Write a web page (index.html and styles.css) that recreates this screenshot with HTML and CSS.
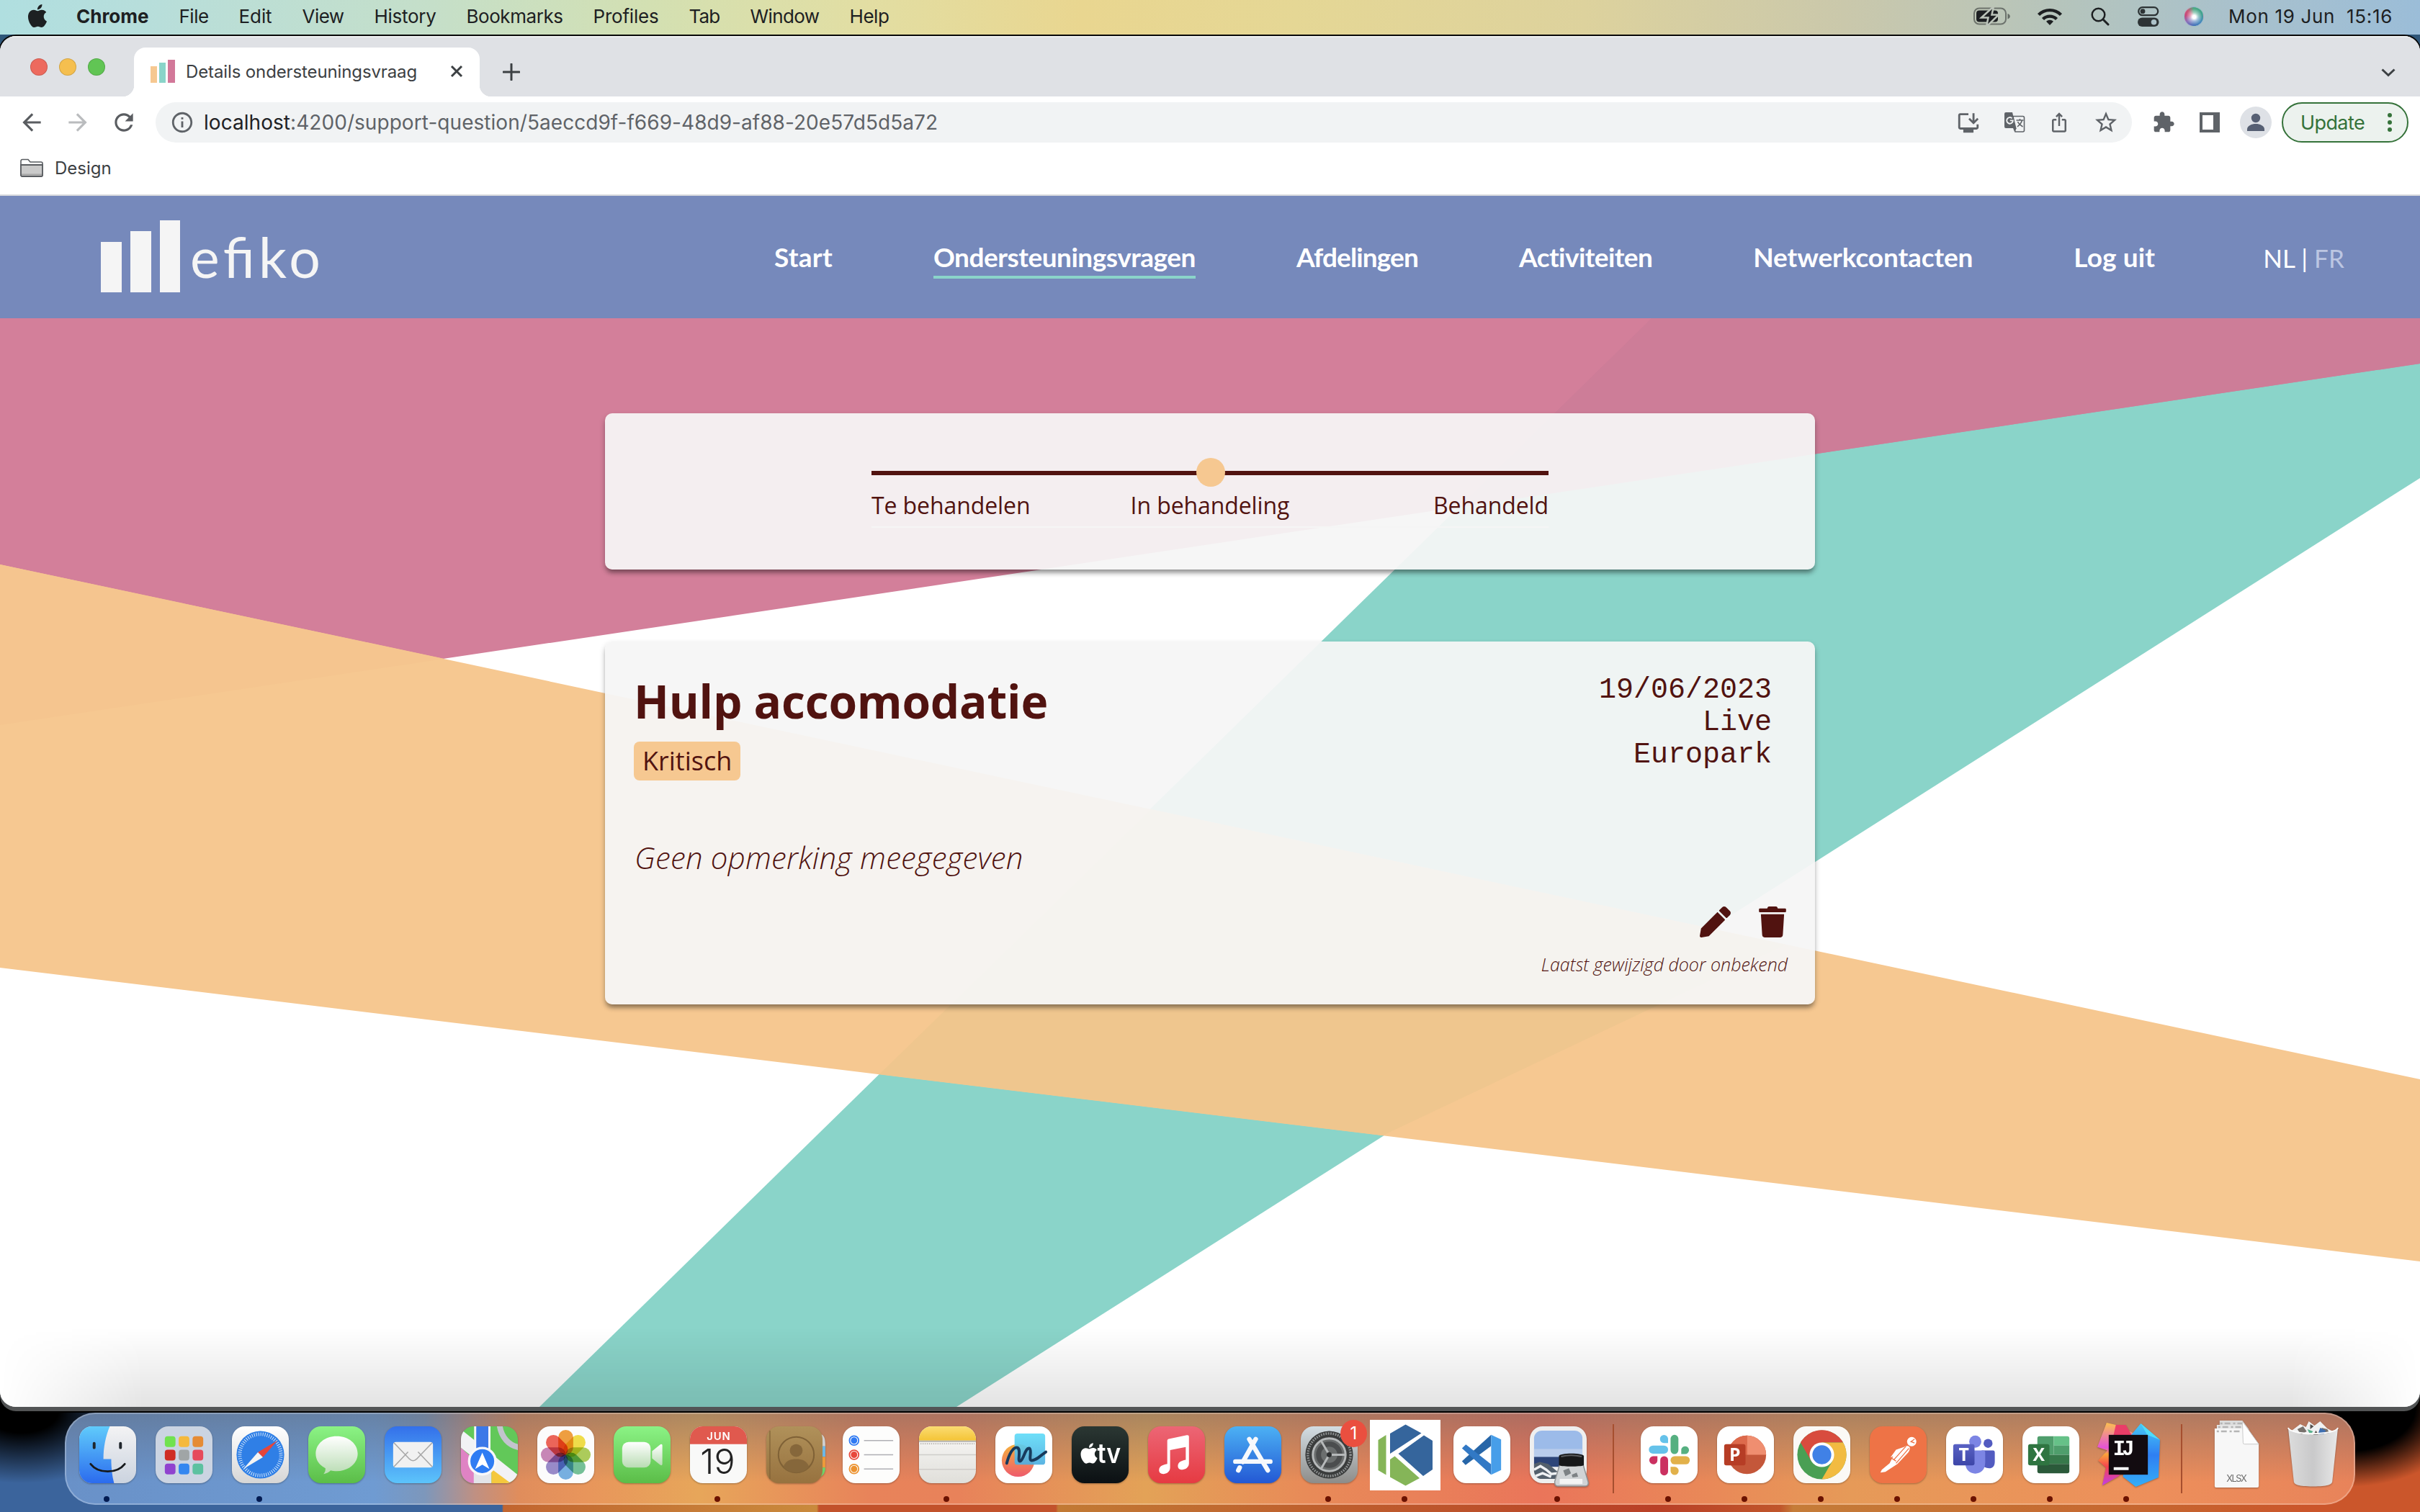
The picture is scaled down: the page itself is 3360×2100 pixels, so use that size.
FILE: index.html
```html
<!DOCTYPE html>
<html lang="nl">
<head>
<meta charset="utf-8">
<title>Details ondersteuningsvraag</title>
<link rel="stylesheet" href="styles.css">
</head>
<body>
<svg class="defs" width="0" height="0">
  <defs>
    <linearGradient id="g-green" x1="0" y1="0" x2="0" y2="1"><stop offset="0" stop-color="#8bf385"/><stop offset="1" stop-color="#5bbd48"/></linearGradient>
    <linearGradient id="g-blue" x1="0" y1="0" x2="0" y2="1"><stop offset="0" stop-color="#60cbfb"/><stop offset="1" stop-color="#2b6bee"/></linearGradient>
    <linearGradient id="g-mail" x1="0" y1="0" x2="0" y2="1"><stop offset="0" stop-color="#3470ea"/><stop offset="1" stop-color="#5cc4fb"/></linearGradient>
    <linearGradient id="g-store" x1="0" y1="0" x2="0" y2="1"><stop offset="0" stop-color="#4cb1f4"/><stop offset="1" stop-color="#2358d4"/></linearGradient>
    <linearGradient id="g-grey" x1="0" y1="0" x2="0" y2="1"><stop offset="0" stop-color="#ffffff"/><stop offset="1" stop-color="#d6d6d6"/></linearGradient>
    <linearGradient id="g-soft" x1="0" y1="0" x2="0" y2="1"><stop offset="0" stop-color="#ffffff"/><stop offset="1" stop-color="#b9dcb3"/></linearGradient>
    <linearGradient id="g-face" x1="0" y1="0" x2="0" y2="1"><stop offset="0" stop-color="#f3f3f4"/><stop offset="1" stop-color="#cbd3df"/></linearGradient>
    <linearGradient id="g-music" x1="0" y1="0" x2="0" y2="1"><stop offset="0" stop-color="#ec6675"/><stop offset="1" stop-color="#e63a42"/></linearGradient>
    <linearGradient id="g-tv" x1="0" y1="0" x2="0" y2="1"><stop offset="0" stop-color="#2b3733"/><stop offset="1" stop-color="#0b1013"/></linearGradient>
    <linearGradient id="g-note" x1="0" y1="0" x2="0" y2="1"><stop offset="0" stop-color="#fbdc72"/><stop offset="1" stop-color="#f4c436"/></linearGradient>
    <linearGradient id="g-paper" x1="0" y1="0" x2="0" y2="1"><stop offset="0" stop-color="#fbfaf9"/><stop offset="1" stop-color="#e0dfda"/></linearGradient>
    <linearGradient id="g-brown" x1="0" y1="0" x2="0" y2="1"><stop offset="0" stop-color="#b0915a"/><stop offset="1" stop-color="#97723f"/></linearGradient>
    <linearGradient id="g-steel" x1="0" y1="0" x2="0" y2="1"><stop offset="0" stop-color="#d3dde3"/><stop offset="1" stop-color="#8d8c89"/></linearGradient>
    <linearGradient id="g-form" x1="0" y1="0" x2="0" y2="1"><stop offset="0" stop-color="#f5b13c"/><stop offset="1" stop-color="#ee5b6c"/></linearGradient>
    <linearGradient id="g-cyan" x1="0" y1="0" x2="0" y2="1"><stop offset="0" stop-color="#62dcf8"/><stop offset="1" stop-color="#4eaee0"/></linearGradient>
    <linearGradient id="g-ij1" x1="0" y1="0" x2="0" y2="1"><stop offset="0" stop-color="#fbc04f"/><stop offset=".4" stop-color="#e552d8"/><stop offset=".5" stop-color="#fba63a"/><stop offset=".7" stop-color="#f5434f"/><stop offset="1" stop-color="#c13de8"/></linearGradient>
    <linearGradient id="g-ij2" x1="0" y1="0" x2="0" y2="1"><stop offset="0" stop-color="#46c9f6"/><stop offset=".5" stop-color="#2f7ff3"/><stop offset="1" stop-color="#35aef7"/></linearGradient>
    <linearGradient id="g-teams" x1="0" y1="0" x2="0" y2="1"><stop offset="0" stop-color="#5a62c4"/><stop offset="1" stop-color="#3c45a8"/></linearGradient>
    <linearGradient id="g-bin" x1="0" y1="0" x2="1" y2="0"><stop offset="0" stop-color="#dcdcdc"/><stop offset=".5" stop-color="#c9c9ca"/><stop offset="1" stop-color="#e8e8e8"/></linearGradient>
    <clipPath id="squircle"><rect width="80" height="80" rx="18"/></clipPath>
    <path id="apple" d="M12.152 6.896c-.948 0-2.415-1.078-3.96-1.04-2.04.027-3.91 1.183-4.961 3.014-2.117 3.675-.546 9.103 1.519 12.09 1.013 1.454 2.208 3.09 3.792 3.039 1.52-.065 2.09-.987 3.935-.987 1.831 0 2.35.987 3.96.948 1.637-.026 2.676-1.48 3.676-2.948 1.156-1.688 1.636-3.325 1.662-3.415-.039-.013-3.182-1.221-3.22-4.857-.026-3.04 2.48-4.494 2.597-4.559-1.429-2.09-3.623-2.324-4.39-2.376-2-.156-3.675 1.09-4.61 1.09zM15.53 3.83c.843-1.012 1.4-2.427 1.245-3.83-1.207.052-2.662.805-3.532 1.818-.78.896-1.454 2.338-1.273 3.714 1.338.104 2.715-.688 3.559-1.701"/>
  </defs>
</svg>

<header class="menubar">
  <svg class="apple" width="32" height="32" viewBox="0 0 24 24"><use href="#apple"/></svg>
  <nav class="menus">
    <b class="m-chrome">Chrome</b><span class="m-file">File</span><span class="m-edit">Edit</span><span class="m-view">View</span><span class="m-history">History</span><span class="m-bookmarks">Bookmarks</span><span class="m-profiles">Profiles</span><span class="m-tab">Tab</span><span class="m-window">Window</span><span class="m-help">Help</span>
  </nav>
  <div class="status">
    <svg width="52" height="26" viewBox="0 0 52 26"><rect x="1" y="1.500" width="44" height="22" rx="7" fill="none" stroke="#1d2022" stroke-opacity=".5" stroke-width="2"/><path d="M47.500 9v7.500c2-.6 3.300-2 3.300-3.700s-1.300-3.200-3.300-3.800z" fill="#1d2022" opacity=".55"/><rect x="4" y="4.500" width="30" height="16" rx="4" fill="#1d2022"/><path d="M28 -1L11 14.500h9.500L18 27 35 10.500h-9.500z" fill="#1d2022" stroke="#bcc4ba" stroke-width="2.500"/></svg>
    <svg class="wifi" width="36" height="26" viewBox="0 0 36 26"><g fill="none" stroke="#1d2022" stroke-width="4.400"><path d="M2.500 10.500a22 22 0 0 1 31 0"/><path d="M8.500 16.500a13.500 13.500 0 0 1 19 0"/></g><path d="M18 25l-5-5.200a7.200 7.200 0 0 1 10 0z" fill="#1d2022"/></svg>
    <svg class="find" width="28" height="26" viewBox="0 0 28 26"><circle cx="11.500" cy="10.500" r="8.800" fill="none" stroke="#1d2022" stroke-width="2.500"/><path d="M18 17l7 7" stroke="#1d2022" stroke-width="3" stroke-linecap="round"/></svg>
    <svg class="control" width="30" height="28" viewBox="0 0 30 28"><rect x="1.200" y="1.200" width="27" height="11" rx="5.500" fill="none" stroke="#2d3335" stroke-width="2.300"/><circle cx="7" cy="6.700" r="3.400" fill="#2d3335"/><rect x="0" y="15.500" width="29.500" height="12.500" rx="6.200" fill="#2d3335"/><circle cx="22.500" cy="21.700" r="3.800" fill="#adc2c9"/></svg>
    <div class="siri"><i></i></div>
    <span class="clock">Mon 19 Jun&nbsp; 15:16</span>
  </div>
</header>

<section class="window">
  <div class="tabstrip">
    <div class="lights"><i class="red"></i><i class="amber"></i><i class="green"></i></div>
    <div class="tab">
      <svg width="34" height="32" viewBox="0 0 34 32"><path fill="#f6c891" d="M0 9h9v23H0z"/><path fill="#8ad4c9" d="M12 4h9v28h-9z"/><path fill="#d27899" d="M24 0h10v32H24z"/></svg>
      <span class="tab-title">Details ondersteuningsvraag</span>
      <svg class="close" width="18" height="18" viewBox="0 0 18 18"><path d="M2 2l14 14M16 2L2 16" stroke="#3c4043" stroke-width="3"/></svg>
    </div>
    <svg class="plus" width="24" height="24" viewBox="0 0 24 24"><path d="M12 1v22M1 12h22" stroke="#3c4043" stroke-width="3" stroke-linecap="round"/></svg>
    <svg class="chev" width="22" height="14" viewBox="0 0 22 14"><path d="M2.500 2.500l8.500 8 8.500-8" fill="none" stroke="#3c4043" stroke-width="3"/></svg>
  </div>
  <div class="toolbar">
    <svg width="38" height="38" viewBox="0 0 24 24"><path fill="#5a5d61" d="M20 11H7.830l5.590-5.590L12 4l-8 8 8 8 1.410-1.410L7.830 13H20v-2z"/></svg>
    <svg class="fwd" width="38" height="38" viewBox="0 0 24 24"><path fill="#babcbe" d="M4 11h12.170l-5.590-5.590L12 4l8 8-8 8-1.410-1.410L16.170 13H4v-2z"/></svg>
    <svg class="reload" width="38" height="38" viewBox="0 0 24 24"><path fill="#5a5d61" d="M17.650 6.350C16.200 4.900 14.210 4 12 4c-4.420 0-7.990 3.580-7.990 8s3.570 8 7.990 8c3.730 0 6.840-2.550 7.730-6h-2.080c-.820 2.330-3.040 4-5.650 4-3.310 0-6-2.690-6-6s2.690-6 6-6c1.660 0 3.140.690 4.220 1.780L13 11h7V4l-2.350 2.350z"/></svg>
    <div class="omnibox">
      <svg width="34" height="34" viewBox="0 0 24 24"><path fill="#5f6368" d="M11 7h2v2h-2zm0 4h2v6h-2zm1-9C6.480 2 2 6.480 2 12s4.480 10 10 10 10-4.480 10-10S17.520 2 12 2zm0 18c-4.410 0-8-3.590-8-8s3.590-8 8-8 8 3.590 8 8-3.590 8-8 8z"/></svg>
      <span class="url"><span class="host">localhost</span>:4200/support-question/5aeccd9f-f669-48d9-af88-20e57d5d5a72</span>
      <div class="actions">
        <svg width="34" height="34" viewBox="0 0 24 24"><path fill="#5f6368" d="M20 17H4V5h8V3H4c-1.100 0-2 .9-2 2v12c0 1.100.9 2 2 2h3v3h10v-3h3c1.100 0 2-.9 2-2v-3h-2v3zM17 14l5-5-1.410-1.410L18 10.170V3h-2v7.170l-2.590-2.580L12 9z"/></svg>
        <svg width="30" height="30" viewBox="0 0 30 30"><path d="M13 6.500h13.500a2 2 0 0 1 2 2V26a2 2 0 0 1-2 2H16z" fill="none" stroke="#5f6368" stroke-width="1.600"/><path d="M3 1h9l5.500 22H3a2 2 0 0 1-2-2V3a2 2 0 0 1 2-2zM13 23h5l-3 5z" fill="#5f6368"/><path d="M17.500 12h10M22.500 10v2M25.500 12c-1 4-4 7-6.500 9M19.500 14c1 2.500 4 5 7 7" fill="none" stroke="#5f6368" stroke-width="1.600"/><path d="M11.600 9.400a4.300 4.300 0 1 0 1.200 3H8.800" fill="none" stroke="#f1f3f4" stroke-width="1.900"/></svg>
        <svg width="30" height="30" viewBox="0 0 24 24"><path fill="#5f6368" d="M16 5l-1.420 1.420-1.590-1.590V16h-1.980V4.830L9.420 6.420 8 5l4-4 4 4zm4 5v11c0 1.100-.9 2-2 2H6c-1.110 0-2-.9-2-2V10c0-1.110.890-2 2-2h3v2H6v11h12V10h-3V8h3c1.100 0 2 .890 2 2z"/></svg>
        <svg width="36" height="36" viewBox="0 0 24 24"><path fill="#5f6368" d="M22 9.240l-7.190-.620L12 2 9.190 8.630 2 9.240l5.460 4.730L5.820 21 12 17.270 18.180 21l-1.630-7.030L22 9.240zM12 15.400l-3.760 2.270 1-4.280-3.320-2.880 4.380-.380L12 6.100l1.710 4.040 4.380.380-3.320 2.880 1 4.280L12 15.400z"/></svg>
      </div>
    </div>
    <svg class="puzzle" width="32" height="32" viewBox="0 0 24 24"><path fill="#5f6368" d="M20.500 11H19V7c0-1.100-.9-2-2-2h-4V3.500C13 2.120 11.880 1 10.500 1S8 2.120 8 3.500V5H4c-1.100 0-1.990.9-1.990 2v3.800H3.500c1.490 0 2.700 1.210 2.700 2.700s-1.210 2.700-2.700 2.700H2V20c0 1.100.9 2 2 2h3.800v-1.500c0-1.490 1.210-2.700 2.700-2.700 1.490 0 2.700 1.210 2.700 2.700V22H17c1.100 0 2-.9 2-2v-4h1.500c1.380 0 2.500-1.120 2.500-2.500S21.880 11 20.500 11z"/></svg>
    <svg class="panel" width="28" height="28" viewBox="0 0 28 28"><path fill="#5f6368" fill-rule="evenodd" d="M0 0h28v28H0zM4 4v20h15V4z"/></svg>
    <svg class="avatar" width="44" height="44" viewBox="0 0 44 44"><circle cx="22" cy="22" r="22" fill="#dee1e6"/><circle cx="22" cy="16" r="6.200" fill="#565f73"/><path d="M10 34v-2.500c0-5 6.500-7.500 12-7.500s12 2.500 12 7.500V34z" fill="#565f73"/></svg>
    <div class="update"><span class="upd-text">Update</span><span class="dots"><i></i><i></i><i></i></span></div>
  </div>
  <div class="bookmarks">
    <svg width="32" height="26" viewBox="0 0 32 26"><path d="M1 3.500a2 2 0 0 1 2-2h8l3 3.500h15a2 2 0 0 1 2 2V23a2 2 0 0 1-2 2H3a2 2 0 0 1-2-2z" fill="#fff" stroke="#5a5d61" stroke-width="1.600"/><path d="M1 9h30v14a2 2 0 0 1-2 2H3a2 2 0 0 1-2-2z" fill="#cacaca" stroke="#5a5d61" stroke-width="1.800"/><path d="M2 22.500h28" stroke="#a4a4a4" stroke-width="2"/></svg>
    <span class="bm-text">Design</span>
  </div>

  <div class="page">
    <header class="site-header">
      <svg class="logo" width="306" height="104" viewBox="0 0 306 104"><g fill="#f5f5f5"><path d="M0 32h29v70H0zM41 17h29v85H41zM82 2h28v100H82z"/><text x="124" y="82" textLength="181" lengthAdjust="spacing" class="wordmark">efiko</text></g></svg>
      <nav class="site-nav">
        <a class="n-start">Start</a><a class="n-vragen active">Ondersteuningsvragen</a><a class="n-afd">Afdelingen</a><a class="n-act">Activiteiten</a><a class="n-net">Netwerkcontacten</a><a class="n-log">Log uit</a>
      </nav>
      <div class="langs">NL | <span>FR</span></div>
    </header>
    <main class="content">
      <svg class="shapes" width="3360" height="1512" viewBox="0 442 3360 1512" preserveAspectRatio="none">
        <path fill="#8ad4c9" d="M2293 442L3360 442V664L1328 1954H749z"/>
        <path fill="#d37f9a" d="M0 442H3360V505L0 1007z"/>
        <path fill="#cd7d98" d="M2293 442H3360V505L2025 704.500z"/>
        <path fill="#f6c891" d="M0 784L3360 1499V1752L0 1344z"/>
        <path fill="#f5c58f" d="M0 784L617 915 0 1007z"/>
        <path fill="#efc68e" d="M1598 1124L2480 1312 1920 1577 1221 1492z"/>
      </svg>
      <div class="cards">
        <section class="card progress">
          <div class="track"><i class="knob"></i></div>
          <div class="labels"><span class="l-todo">Te behandelen</span><span>In behandeling</span><span>Behandeld</span></div>
        </section>
        <section class="card question">
          <div class="top">
            <div>
              <h1>Hulp accomodatie</h1>
              <span class="badge">Kritisch</span>
            </div>
            <div class="meta">19/06/2023<br>Live<br>Europark</div>
          </div>
          <p class="comment">Geen opmerking meegegeven</p>
          <div class="tools">
            <svg width="43" height="43" viewBox="0 0 512 512"><path fill="#511310" d="M497.900 142.100l-46.100 46.100c-4.700 4.700-12.300 4.700-17 0l-111-111c-4.700-4.700-4.700-12.300 0-17l46.100-46.100c18.700-18.700 49.100-18.700 67.900 0l60.100 60.100c18.800 18.700 18.800 49.100 0 67.900zM284.200 99.800L21.600 362.400.4 483.900c-2.900 16.400 11.400 30.600 27.800 27.800l121.500-21.300 262.600-262.600c4.700-4.700 4.700-12.300 0-17l-111-111c-4.800-4.700-12.400-4.700-17.100 0z"/></svg>
            <svg width="38" height="43" viewBox="0 0 448 512"><path fill="#511310" d="M432 32H312l-9.400-18.700A24 24 0 0 0 281.100 0H166.800a23.720 23.720 0 0 0-21.400 13.300L136 32H16A16 16 0 0 0 0 48v32a16 16 0 0 0 16 16h416a16 16 0 0 0 16-16V48a16 16 0 0 0-16-16zM53.200 467a48 48 0 0 0 47.900 45h245.800a48 48 0 0 0 47.900-45L416 128H32z"/></svg>
          </div>
          <p class="edited">Laatst gewijzigd door onbekend</p>
        </section>
      </div>
    </main>
  </div>
</section>

<footer class="dock">
  <div class="slot run"><svg viewBox="0 0 80 80"><g clip-path="url(#squircle)"><path fill="url(#g-face)" d="M0 0h80v80H0z"/><path fill="url(#g-blue)" d="M0 0h43c-6 14-9 30-9 46h11c0 12 1 23 4 34H0z"/></g><path d="M21 24v6M58 24v6" stroke="#20262c" stroke-width="4" stroke-linecap="round"/><path d="M16 53c11 14 37 14 48 0" fill="none" stroke="#16191c" stroke-width="2.800" stroke-linecap="round"/></svg></div>
  <div class="slot"><svg viewBox="0 0 80 80"><rect width="80" height="80" rx="18" fill="#cbd4e2"/><g><rect x="13" y="14" width="15" height="15" rx="4" fill="#70e24f"/><rect x="32.500" y="14" width="15" height="15" rx="4" fill="#f5b93d"/><rect x="52" y="14" width="15" height="15" rx="4" fill="#e58b35"/><rect x="13" y="33" width="15" height="15" rx="4" fill="#cf2d24"/><rect x="32.500" y="33" width="15" height="15" rx="4" fill="#a0a5a6"/><rect x="52" y="33" width="15" height="15" rx="4" fill="#e64a5c"/><rect x="13" y="52.500" width="15" height="15" rx="4" fill="#9043cf"/><rect x="32.500" y="52.500" width="15" height="15" rx="4" fill="#3386f0"/><rect x="52" y="52.500" width="15" height="15" rx="4" fill="#5cc1a0"/></g></svg></div>
  <div class="slot run"><svg viewBox="0 0 80 80"><rect width="80" height="80" rx="18" fill="url(#g-grey)"/><circle cx="40" cy="40" r="33.500" fill="#2f7fe6"/><circle cx="40" cy="40" r="29" fill="none" stroke="#d6e8fb" stroke-width="5" stroke-dasharray="1 2.036"/><path fill="#e5453a" d="M64 20L36.500 36.500l7 7z"/><path fill="#f4f4f4" d="M16 60l20.500-23.500 7 7z"/></svg></div>
  <div class="slot"><svg viewBox="0 0 80 80"><rect width="80" height="80" rx="18" fill="url(#g-green)"/><path fill="url(#g-soft)" d="M40 14c16.500 0 29.500 10.500 29.500 24.500S56.500 63 40 63c-3 0-6-.3-8.500-1-2.500 2.500-6 4.500-10 5 2-2.500 2.800-5 2.600-8C15.500 54.500 10.500 47.500 10.500 38.500 10.500 24.500 23.500 14 40 14z"/></svg></div>
  <div class="slot"><svg viewBox="0 0 80 80"><rect width="80" height="80" rx="18" fill="url(#g-mail)"/><rect x="12" y="22" width="56" height="36" rx="4" fill="#f1f1f1"/><path d="M13 57l20-21M67 57L47 36M13 23l22 23c3 3 7 3 10 0l22-23" fill="none" stroke="#a8a8a8" stroke-width="1.600"/></svg></div>
  <div class="slot"><svg viewBox="0 0 80 80"><g clip-path="url(#squircle)"><path fill="#62c859" d="M0 0h80v80H0z"/><path d="M-4 14l90 72" stroke="#f2f2f5" stroke-width="20"/><path fill="#df83c4" d="M0 30l20 18v32H0z"/><path fill="#e3e4e8" d="M18 40h25v40H18z"/><path fill="#f5c83d" d="M43 60l27 20H43z"/><path fill="#3c78e8" stroke="#f5f5f8" stroke-width="3" d="M20 -3h20v52H20z"/><path d="M54 -4c2 20 14 32 30 34" fill="none" stroke="#c2c4cd" stroke-width="8"/></g><circle cx="30" cy="49" r="18.500" fill="#2f7cf3" stroke="#f7f7fa" stroke-width="3.500"/><path fill="#fff" d="M30 37l10 23-10-6-10 6z"/></svg></div>
  <div class="slot"><svg viewBox="0 0 80 80"><rect width="80" height="80" rx="18" fill="#fcfcfc"/><g class="petals"><rect x="29.500" y="5" width="21" height="35" rx="10.500" fill="#f0962c"/><rect x="29.500" y="5" width="21" height="35" rx="10.500" fill="#f1dc37" transform="rotate(45 40 40)"/><rect x="29.500" y="5" width="21" height="35" rx="10.500" fill="#a5c94a" transform="rotate(90 40 40)"/><rect x="29.500" y="5" width="21" height="35" rx="10.500" fill="#67bd8e" transform="rotate(135 40 40)"/><rect x="29.500" y="5" width="21" height="35" rx="10.500" fill="#69a9e0" transform="rotate(180 40 40)"/><rect x="29.500" y="5" width="21" height="35" rx="10.500" fill="#8f7fc6" transform="rotate(225 40 40)"/><rect x="29.500" y="5" width="21" height="35" rx="10.500" fill="#c47bb0" transform="rotate(270 40 40)"/><rect x="29.500" y="5" width="21" height="35" rx="10.500" fill="#ec5548" transform="rotate(315 40 40)"/></g></svg></div>
  <div class="slot"><svg viewBox="0 0 80 80"><rect width="80" height="80" rx="18" fill="url(#g-green)"/><rect x="12" y="22" width="40" height="36" rx="9" fill="url(#g-soft)"/><path fill="url(#g-soft)" d="M54 35l11-9c2-1.500 3.500-1 3.500 1.500v25c0 2.500-1.500 3-3.500 1.500l-11-9z"/></svg></div>
  <div class="slot run warm"><svg viewBox="0 0 80 80"><rect width="80" height="80" rx="18" fill="#f9f9f8"/><path clip-path="url(#squircle)" fill="#e0594e" d="M0 0h80v25H0z"/><text x="40" y="19" class="cal-month" textLength="33">JUN</text><text x="39" y="67" class="cal-day" textLength="49">19</text></svg></div>
  <div class="slot"><svg viewBox="0 0 80 80"><path fill="#cfcfcf" d="M74 10c7 2 9 5 9 18H74z"/><path fill="#6cb8e8" d="M74 28h9v15h-9z"/><path fill="#ee9a3a" d="M74 43h9v15h-9z"/><path fill="#6ed468" d="M74 58h9c0 8-4 12-9 14z"/><rect width="79" height="80" rx="18" fill="url(#g-brown)"/><path d="M5 6v68" stroke="#7d5f34" stroke-width="2" opacity=".6"/><circle cx="42" cy="40" r="25" fill="none" stroke="#7f6136" stroke-width="2"/><circle cx="42" cy="34" r="9" fill="#86673b"/><path fill="#86673b" d="M24 57c3-9 10-11 18-11s15 2 18 11c-5 6-11 8-18 8s-13-2-18-8z"/></svg></div>
  <div class="slot"><svg viewBox="0 0 80 80"><rect width="80" height="80" rx="18" fill="#fdfdfc"/><path d="M30 20h41M30 40h41M30 60h41" stroke="#b0b0b4" stroke-width="1.600"/><g fill="none" stroke-width="1.800"><circle cx="16" cy="20" r="6.500" stroke="#2f7af3"/><circle cx="16" cy="40" r="6.500" stroke="#e8483c"/><circle cx="16" cy="60" r="6.500" stroke="#ec9330"/></g><circle cx="16" cy="20" r="4.500" fill="#2f7af3"/><circle cx="16" cy="40" r="4.500" fill="#e8483c"/><circle cx="16" cy="60" r="4.500" fill="#ec9330"/></svg></div>
  <div class="slot run warm"><svg viewBox="0 0 80 80"><g clip-path="url(#squircle)"><path fill="url(#g-paper)" d="M0 0h80v80H0z"/><path fill="url(#g-note)" d="M0 0h80v20H0z"/><path d="M0 21h80" stroke="#b5b2ac" stroke-width="1.800"/><path d="M2 24.500h76" stroke="#a9a6a0" stroke-width="1.400" stroke-dasharray="1.400 1.600"/><path d="M0 40h80M0 60.500h80" stroke="#cfcdca" stroke-width="1.400"/></g></svg></div>
  <div class="slot"><svg viewBox="0 0 80 80"><rect width="80" height="80" rx="18" fill="#fff"/><circle cx="32" cy="48" r="23" fill="url(#g-form)"/><rect x="27" y="10" width="43" height="44" rx="4" fill="url(#g-cyan)" opacity=".92"/><path d="M16 52c3-12 9-24 15-22 6 3-1 20 4 19 5-2 7-20 13-18 4 3-2 17 3 17 7 0 11-6 20-12" fill="none" stroke="#173a5c" stroke-width="4" stroke-linecap="round"/></svg></div>
  <div class="slot"><svg viewBox="0 0 80 80"><rect width="80" height="80" rx="18" fill="url(#g-tv)"/><g transform="translate(10 23.500) scale(1.200)" fill="#fff"><use href="#apple"/></g><text x="36" y="52" class="tv" textLength="33" lengthAdjust="spacingAndGlyphs">tv</text></svg></div>
  <div class="slot"><svg viewBox="0 0 80 80"><rect width="80" height="80" rx="18" fill="url(#g-music)"/><path fill="#fff" d="M27 20.500c0-1.500.8-2.400 2.200-2.700L54.500 12.500c1.800-.4 3 .4 3 2.200V52c0 5-3.500 8.500-9 9-4.500.2-7-2.500-6.500-6 .5-4.500 4-6.500 11-8V29L31 33.500V58c0 5-3.500 8.500-9 9-4.500.2-7-2.500-6.500-6 .5-4.500 4-6.500 11.500-8z"/></svg></div>
  <div class="slot"><svg viewBox="0 0 80 80"><rect width="80" height="80" rx="18" fill="url(#g-store)"/><g stroke="#f7f9fc" stroke-width="6.500" stroke-linecap="round"><path d="M44 18L26 50M35 18l26 44M15.500 49.500h49M21.500 58l-2 4"/></g></svg></div>
  <div class="slot run warm"><svg viewBox="0 0 80 80"><rect width="80" height="80" rx="18" fill="url(#g-steel)"/><circle cx="40" cy="40" r="33.500" fill="#3a3c3c"/><circle cx="40" cy="40" r="30" fill="none" stroke="#8d9091" stroke-width="3.500" stroke-dasharray="1.800 1.600"/><circle cx="40" cy="40" r="23" fill="#6b6e6e" stroke="#b6b9ba" stroke-width="3"/><circle cx="40" cy="40" r="15" fill="none" stroke="#4b4d4e" stroke-width="7"/><path d="M40 40h22M40 40L29 21M40 40L29 59" stroke="#b6b9ba" stroke-width="3"/><circle cx="40" cy="40" r="3.500" fill="#2d2f30"/></svg><span class="count">1</span></div>
  <div class="slot run warm"><svg class="square" viewBox="0 0 98 98"><path fill="#fff" d="M0 0h98v98H0z"/><path fill="#35659c" d="M28 19L49.500 6.500 71.500 18.500 28 47zM75 21.500l12 7.500v40L74 78 39.500 47z"/><path fill="#85b558" d="M22.500 21v55.500l-11-6.500V28zM34.500 50.500L69 81 49.500 91.500 28 79.500V55z"/></svg></div>
  <div class="slot"><svg viewBox="0 0 80 80"><rect width="80" height="80" rx="18" fill="#fff"/><path fill="#2766a8" d="M53 12L18 43.500 12 49l5 5.500 36-27z"/><path fill="#3279c5" d="M12 31l5.500-5.500L53 53.500V68z"/><path fill="#479ee9" d="M53 12l14 6.500v43L53 68z"/></svg></div>
  <div class="slot run warm"><svg viewBox="0 0 80 80"><rect width="80" height="80" rx="18" fill="#efefef"/><clipPath id="pv"><rect x="6" y="6" width="68" height="68" rx="11"/></clipPath><g clip-path="url(#pv)"><path fill="#9cbbe9" d="M0 0h80v44H0z"/><path fill="#b9cdec" d="M0 32h80v12H0z"/><path fill="#2d4579" d="M0 43h80v14H0z"/><path fill="#54606c" d="M0 55l14-5 12 3 12 10 20 2v20H0z"/><path d="M6 61l9-5 8 5 7 6 9-1M8 70l10-4 12 5" fill="none" stroke="#eff1f3" stroke-width="3.500"/></g><path fill="#d0d3d5" stroke="#8f9294" stroke-width="1.500" d="M42 54h33l7 24c1 4-1 6-4 6H39c-3 0-4-2-4-6z"/><path fill="#f3f4f4" d="M42 74h32v7H42z"/><path fill="#7d8285" d="M47 62l8-3 3 7-8 4zM59 68l7-3 2 6-8 1z"/><path fill="#17181a" d="M41 42c0-5 35-5 35 0v13c-6 2-29 2-35 0z"/><path d="M44 42.500c8-2 20-2 29 0" stroke="#5a5c5f" stroke-width="2" fill="none"/></svg></div>
  <div class="sep"></div>
  <div class="slot run warm"><svg viewBox="0 0 80 80"><rect width="80" height="80" rx="18" fill="#fff"/><g><rect x="42" y="12" width="11" height="27" rx="5.500" fill="#56b081"/><path fill="#56b081" d="M57 39v-6.500a5.500 5.500 0 1 1 5.500 6.500z"/><rect x="11.500" y="27" width="27" height="11.500" rx="5.700" fill="#65c2ea"/><path fill="#65c2ea" d="M38.500 23.500h-6a5.700 5.700 0 1 1 6-6z"/><rect x="27.500" y="42" width="11" height="27" rx="5.500" fill="#cb3161"/><path fill="#cb3161" d="M23.500 42v6a5.700 5.700 0 1 1-6-6z"/><rect x="42" y="42" width="27" height="11.500" rx="5.700" fill="#e2b14a"/><path fill="#e2b14a" d="M42 57h6a5.700 5.700 0 1 1-6 6z"/></g></svg></div>
  <div class="slot run warm"><svg viewBox="0 0 80 80"><rect width="80" height="80" rx="18" fill="#fff"/><circle cx="42" cy="40" r="27" fill="#c4573a"/><path fill="#ef8e70" d="M42 13a27 27 0 0 1 27 27H42z"/><path fill="#dd6a4c" d="M42 13a27 27 0 0 0-27 27h27z"/><rect x="10" y="25" width="30" height="30" rx="3" fill="#b63d25"/><text x="25" y="48.500" class="office">P</text></svg></div>
  <div class="slot run warm"><svg viewBox="0 0 80 80"><rect width="80" height="80" rx="18" fill="#fbf9f6"/><circle cx="40" cy="40" r="34.500" fill="#4a9f54"/><path fill="#d84c3e" d="M10.100 22.700A34.500 34.500 0 0 1 69.900 22.700H40L25 48.500z"/><path fill="#f2bb41" d="M69.900 22.700A34.500 34.500 0 0 1 40 74.500L55 48.700 40 22.700z"/><circle cx="40" cy="40" r="17.300" fill="#fff"/><circle cx="40" cy="40" r="13.300" fill="#4081e6"/></svg></div>
  <div class="slot run warm"><svg viewBox="0 0 80 80"><rect width="80" height="80" rx="18" fill="#ee7346"/><circle cx="59" cy="21.500" r="6.500" fill="#fff"/><path d="M63 18l-5 3.500 5 2" fill="none" stroke="#ee7346" stroke-width="1.400"/><path fill="#fff" d="M48 29c3-2 6-2 8 0 1 2 0 5-2 8L39 53 22 64l-7 1 2-4 11-9 5-10-4 2 8-11z"/><path d="M51 28L34 47M55 31L37 52M28 43l9 6" stroke="#ee7346" stroke-width="1.300"/></svg></div>
  <div class="slot run warm"><svg viewBox="0 0 80 80"><rect width="80" height="80" rx="18" fill="#fff"/><circle cx="59" cy="24" r="6.300" fill="#525bc0"/><path fill="#525bc0" d="M50 34h16a2.500 2.500 0 0 1 2.500 2.500V49c0 7-3 10-8 10s-8-2-10.500-6z"/><circle cx="41" cy="21.500" r="8.500" fill="#7c85e4"/><path fill="#7c85e4" d="M27 34h25a3 3 0 0 1 3 3v14c0 10-6 15.500-14 15.500S27 61 27 51z"/><rect x="10" y="25" width="30" height="30" rx="3" fill="url(#g-teams)"/><text x="25" y="48.500" class="office">T</text></svg></div>
  <div class="slot run warm"><svg viewBox="0 0 80 80"><rect width="80" height="80" rx="18" fill="#fff"/><path fill="#4f9e6c" d="M21 17a3 3 0 0 1 3-3h20v13H21zM21 27h23v13H21z"/><path fill="#66c188" d="M44 14h19a3 3 0 0 1 3 3v10H44z"/><path fill="#4f9e6c" d="M44 27h22v13H44z"/><path fill="#37794b" d="M21 40h45v13H21z"/><path fill="#2b5a3a" d="M21 53h45v10a3 3 0 0 1-3 3H24a3 3 0 0 1-3-3z"/><rect x="8" y="25" width="30" height="30" rx="3" fill="#2f7541"/><text x="23" y="48.500" class="office">X</text></svg></div>
  <div class="slot run warm"><svg viewBox="0 0 80 80"><path fill="url(#g-ij1)" d="M11 -5L24 -2 50 10 46 50 28 70 5 83 10 58 -1 48 12 34 -2 29z"/><path fill="url(#g-ij2)" d="M59 -4L86 19 84 72 52 85 34 71 44 14z"/><path fill="#4fdcf8" d="M59 -4L86 19 68 12z"/><path fill="#ea3d68" d="M24 -2h14l8 14-26 4z"/><rect x="14" y="12" width="55" height="56" fill="#120b10"/><text x="20" y="40" class="ij" textLength="30">IJ</text><path fill="#fff" d="M21 57.500h21v4H21z"/></svg></div>
  <div class="sep narrow"></div>
  <div class="slot"><svg viewBox="0 0 80 80"><path fill="#dcdcdc" d="M16-8h32l9 12v30H16z"/><path fill="#e6e6e6" d="M12-2h38l8 12v30H12z"/><path fill="#f7f7f7" d="M9 3h39l23 22v59a2 2 0 0 1-2 2H11a2 2 0 0 1-2-2z"/><path d="M14 1h34M12 7h35M17-4h31" stroke="#b5b5b5" stroke-width="2.500" stroke-dasharray="3 3 8 4"/><path fill="#fdfdfd" stroke="#c9c9c9" d="M48-7L71 25H51a2 2 0 0 1-2-2z"/><text x="40" y="78" class="xlsx" textLength="29">XLSX</text></svg></div>
  <div class="slot"><svg viewBox="0 0 80 80"><path fill="#f1f1f1" d="M10 6l12-9 8 4 4-8 8 6 8-6 10 10 8 4-4 8H14z"/><path fill="#77716c" d="M18 4l8-4 5 7-8 5zM52 2l8 2 4 7-10-1z"/><path fill="#3f6fb0" d="M50 2l8 4-4 8-7-3z"/><path fill="#57b08c" d="M32 4l8 3-4 5z"/><path fill="#554f4b" d="M36-3l5 3-5 4zM44 6l4 6-8 1z"/><path fill="url(#g-bin)" d="M5 2c6 13 64 13 70 0l-8 76c-1 4-6 6.500-27 6.500S14 82 13 78z"/><path d="M5 2c3 11 67 11 70 0" fill="none" stroke="#fafafa" stroke-width="2"/></svg></div>
</footer>
</body>
</html>
```
FILE: styles.css
```css
* { box-sizing: border-box; }

body {
  margin: 0;
  width: 3360px;
  height: 2100px;
  overflow: hidden;
  display: flex;
  flex-direction: column;
  font-family: Inter, "Liberation Sans", sans-serif;
  background:
    radial-gradient(ellipse 170px 100px at 30px 1960px, #000 30%, transparent),
    radial-gradient(ellipse 170px 110px at 3260px 1955px, #000 55%, transparent),
    linear-gradient(90deg, #3b649c 0 697px, #c2652f 699px, #c98a3c 1134px, #c2522b 1137px 1466px, #c27a34 1469px, #bf622e 1800px, #b94027 2300px, #c0562b 2472px, #c57c38 2490px, #c6652f 3000px, #cb562b 3200px) 0 1000px / 3360px 1100px no-repeat,
    #2f5679;
}

.defs { position: absolute; }
svg { display: block; flex: none; }

/* ---- menu bar ---- */
.menubar {
  height: 48px;
  flex: none;
  display: flex;
  align-items: center;
  justify-content: space-between;
  padding: 0 38px 2px 36px;
  font-size: 26px;
  line-height: 46px;
  color: #1d2022;
  background: linear-gradient(90deg, #b0dfe0 0, #b7dedb 200px, #c5dfc9 600px, #d3e0b2 900px, #e2dea3 1200px, #e9d690 1500px, #e5d795 1800px, #ddd29d 2200px, #cac8ab 2560px, #b4c4bd 2880px, #a9c1cc 3100px, #9bbdd8 3360px);
}
.apple { margin-bottom: 3px; fill: #1d2022; }
.menus { display: flex; gap: 42px; margin: 0 auto 0 38px; white-space: nowrap; }
.m-file { letter-spacing: -.53px; }
.m-edit { letter-spacing: -.09px; }
.m-view { letter-spacing: -.55px; }
.m-history { letter-spacing: -.29px; }
.m-bookmarks { letter-spacing: -.45px; }
.m-profiles { letter-spacing: -.21px; }
.m-tab { letter-spacing: -.8px; }
.m-window { letter-spacing: -.6px; }
.m-help { letter-spacing: -.43px; }
.status { display: flex; align-items: center; white-space: nowrap; }
.clock { letter-spacing: .67px; }
.wifi { margin-left: 36px; }
.find { margin-left: 38px; }
.control { margin-left: 38px; }
.siri {
  width: 28px;
  height: 28px;
  margin: 0 34px;
  border-radius: 50%;
  border: 1.500px solid rgba(190, 205, 220, .7);
  background: conic-gradient(#4bab84, #3f9f8c 20%, #3f86b8 35%, #4470b8 50%, #8a6fb8 65%, #c94678 78%, #c85a78 88%, #4bab84);
}
.siri i { display: block; height: 100%; border-radius: 50%; background: radial-gradient(circle at 52% 52%, #fff 12%, rgba(255, 255, 255, .5) 30%, transparent 60%); }

/* ---- browser window ---- */
.window {
  margin-top: 2px;
  height: 1904px;
  flex: none;
  display: flex;
  flex-direction: column;
  border-radius: 22px;
  overflow: hidden;
  background: #fff;
  box-shadow: 0 6px 0 #525455, 0 0 0 2px #080808, 0 8px 0 #000;
}
.tabstrip {
  height: 84px;
  flex: none;
  display: flex;
  align-items: flex-end;
  padding-left: 42px;
  background: #dfe1e5;
  box-shadow: inset 0 2px 0 #eef0f0;
}
.lights { display: flex; gap: 16px; margin-bottom: 29px; }
.lights i { width: 24px; height: 24px; border-radius: 50%; box-shadow: inset 0 0 0 1px rgba(0, 0, 0, .14); }
.red { background: #ed6a5e; }
.amber { background: #f5bf4f; }
.green { background: #61c554; }
.tab {
  position: relative;
  width: 480px;
  height: 68px;
  margin-left: 40px;
  padding: 0 23px 2px 23px;
  display: flex;
  align-items: center;
  border-radius: 16px 16px 0 0;
  background: #fff;
}
.tab::before, .tab::after {
  content: "";
  position: absolute;
  bottom: 0;
  width: 16px;
  height: 16px;
}
.tab::before { left: -16px; background: radial-gradient(circle at 0 0, transparent 16px, #fff 16.500px); }
.tab::after { right: -16px; background: radial-gradient(circle at 100% 0, transparent 16px, #fff 16.500px); }
.tab-title { margin-left: 15px; font-size: 24px; letter-spacing: -.12px; color: #3c4043; white-space: nowrap; }
.close { margin-left: auto; }
.plus { margin: 0 0 22px 32px; }
.chev { margin: 0 33px 26px auto; }

.toolbar {
  height: 72px;
  flex: none;
  display: flex;
  align-items: center;
  padding: 0 16px 0 25px;
}
.fwd { margin-left: 26px; }
.reload { margin-left: 26px; }
.omnibox {
  width: 2744px;
  height: 56px;
  margin-left: 25px;
  padding: 0 18px 0 20px;
  display: flex;
  align-items: center;
  border-radius: 28px;
  background: #f1f3f4;
}
.url { margin-left: 13px; font-size: 28px; letter-spacing: .05px; color: #5f6368; white-space: nowrap; }
.host { color: #202124; }
.actions { margin-left: auto; display: flex; align-items: center; gap: 32px; }
.puzzle { margin-left: 28px; }
.panel { margin-left: 34px; }
.avatar { margin-left: 28px; }
.update {
  width: 176px;
  height: 56px;
  margin-left: 14px;
  padding: 0 21px 0 24px;
  display: flex;
  align-items: center;
  justify-content: space-between;
  border: 2px solid #35723a;
  border-radius: 28px;
  background: #ecf2ee;
  color: #35723a;
  font-size: 27px;
  letter-spacing: -.6px;
}
.dots { display: grid; gap: 4px; }
.dots i { width: 6px; height: 6px; border-radius: 50%; background: #35723a; }
.bookmarks {
  height: 66px;
  flex: none;
  display: flex;
  align-items: center;
  padding: 0 0 10px 28px;
  gap: 16px;
  font-size: 24px;
  color: #3c4043;
  border-bottom: 2px solid #d9dbde;
}

/* ---- web page ---- */
.page { flex: 1; display: flex; flex-direction: column; position: relative; }
.page::after {
  content: "";
  position: absolute;
  inset: auto 0 0 0;
  height: 110px;
  background: linear-gradient(180deg, transparent, rgba(0, 0, 0, .11));
  -webkit-mask-image: linear-gradient(90deg, transparent, #000 200px, #000 3180px, transparent);
  mask-image: linear-gradient(90deg, transparent, #000 200px, #000 3180px, transparent);
}
.site-header {
  height: 170px;
  flex: none;
  display: flex;
  align-items: center;
  padding: 0 105px 0 140px;
  background: #7689bb;
  color: #fff;
  font-family: Lato, "Open Sans", sans-serif;
  font-size: 37px;
  white-space: nowrap;
}
.logo { margin-top: -2px; }
.wordmark { font-family: Lato, sans-serif; font-size: 77px; }
.site-nav { margin-left: auto; display: flex; gap: 140px; font-weight: 700; }
.site-nav a { padding-top: 4px; line-height: 52px; border-bottom: 4px solid transparent; }
.site-nav .active { border-color: #8ad4c9; }
.n-start { letter-spacing: .28px; }
.n-vragen { letter-spacing: -.49px; }
.n-afd { letter-spacing: -.87px; }
.n-act { letter-spacing: -.57px; }
.n-net { letter-spacing: -.13px; }
.n-log { letter-spacing: .15px; }
.langs { margin-left: 150px; padding-top: 2px; font-size: 35px; letter-spacing: .1px; }
.langs span { color: #bcc6e2; }

.content { flex: 1; position: relative; background: #fff; }
.shapes { position: absolute; top: 0; left: 0; }
.cards { position: relative; width: 1680px; margin: 0 auto; padding-top: 132px; color: #511310; font-family: "Open Sans", sans-serif; }
.card {
  border-radius: 10px;
  background: rgba(245, 245, 245, .94);
  box-shadow: 0 6px 6px -2px rgba(0, 0, 0, .32), 0 4px 8px rgba(0, 0, 0, .2);
}
.progress { height: 217px; padding: 80px 370px 0; }
.track { height: 6px; background: #511310; display: flex; justify-content: center; align-items: center; }
.knob { width: 40px; height: 40px; flex: none; border-radius: 50%; background: #f6c891; margin: -2px 0 0 2px; }
.labels {
  display: grid;
  grid-template-columns: 1fr auto 1fr;
  height: 73px;
  padding-top: 20px;
  font-size: 32px;
  line-height: 44px;
  letter-spacing: -.1px;
  border-bottom: 2px solid #f5f5f5;
}
.labels span:last-child { text-align: right; }
.question { height: 504px; margin-top: 100px; padding: 38px 38px 0 40px; }
.top { display: flex; justify-content: space-between; height: 232px; }
h1 { margin: 0; font-size: 64px; line-height: 90px; font-weight: 700; letter-spacing: -.22px; }
.badge { display: inline-block; height: 54px; margin-top: 11px; padding: 0 12px; border-radius: 8px; background: #f6c891; font-size: 36px; line-height: 54px; }
.meta { padding: 7px 22px 0 0; text-align: right; font: 40px/45px "Liberation Mono", monospace; }
.comment { margin: 0 0 0 1px; font-size: 42px; line-height: 60px; font-weight: 300; font-style: italic; letter-spacing: .2px; }
.tools { display: flex; justify-content: flex-end; gap: 39px; margin-top: 38px; padding-right: 2px; }
.edited { margin: 17px 0 0; text-align: right; font-size: 25px; line-height: 40px; font-weight: 300; font-style: italic; }

/* ---- dock ---- */
.dock {
  width: 3180px;
  height: 128px;
  margin: 8px 0 0 90px;
  padding: 0 4px;
  flex: none;
  display: flex;
  border-radius: 42px;
  border: 2px solid rgba(255, 255, 255, .25);
  background:
    linear-gradient(180deg, rgba(90, 95, 105, .42), rgba(90, 95, 105, 0) 75%),
    linear-gradient(90deg, #6991c8 0, #6f9bd2 430px, #7d97bb 500px, #c09082 570px, #e08d5c 630px, #e8955b 720px, #e7a65a 880px, #e8835a 1120px, #e8825a 1240px, #e3a257 1500px, #e88b58 1720px, #ea755a 2050px, #e98a58 2300px, #e69a58 2480px, #ed8f5b 2900px, #e8835a 3180px);
  background-origin: border-box;
}
.slot { position: relative; width: 106px; height: 124px; flex: none; display: flex; justify-content: center; padding-top: 17px; }
.slot svg { width: 79px; height: 79px; overflow: visible; filter: drop-shadow(0 1px 1px rgba(0, 0, 0, .3)); }
.slot .square { width: 98px; height: 98px; margin-top: -9px; filter: none; }
.run::after { content: ""; position: absolute; left: 48px; bottom: 2px; width: 8px; height: 8px; border-radius: 50%; background: #031b52; }
.warm::after { background: #6b1200; }
.sep { width: 48px; flex: none; display: flex; justify-content: center; }
.narrow { width: 46px; }
.sep::before { content: ""; width: 2px; height: 96px; margin-top: 14px; background: #a64f2f; }
.petals rect { mix-blend-mode: multiply; opacity: .9; }
.count {
  position: absolute;
  left: 69px;
  top: 8px;
  width: 37px;
  height: 38px;
  border-radius: 50%;
  background: #ea4f3f;
  color: #fff;
  font-size: 24px;
  line-height: 37px;
  text-align: center;
}
.cal-month { font: 600 15px Inter, sans-serif; fill: #fff; text-anchor: middle; }
.cal-day { font: 300 49px Inter, sans-serif; fill: #222; text-anchor: middle; }
.tv { font: 600 38px Inter, sans-serif; fill: #fff; }
.office { font: 700 25px "Open Sans", sans-serif; fill: #fff; text-anchor: middle; }
.ij { font: 700 29px "Liberation Mono", monospace; fill: #fff; }
.xlsx { font: 13px Inter, sans-serif; fill: #6b6b6b; text-anchor: middle; }
```
